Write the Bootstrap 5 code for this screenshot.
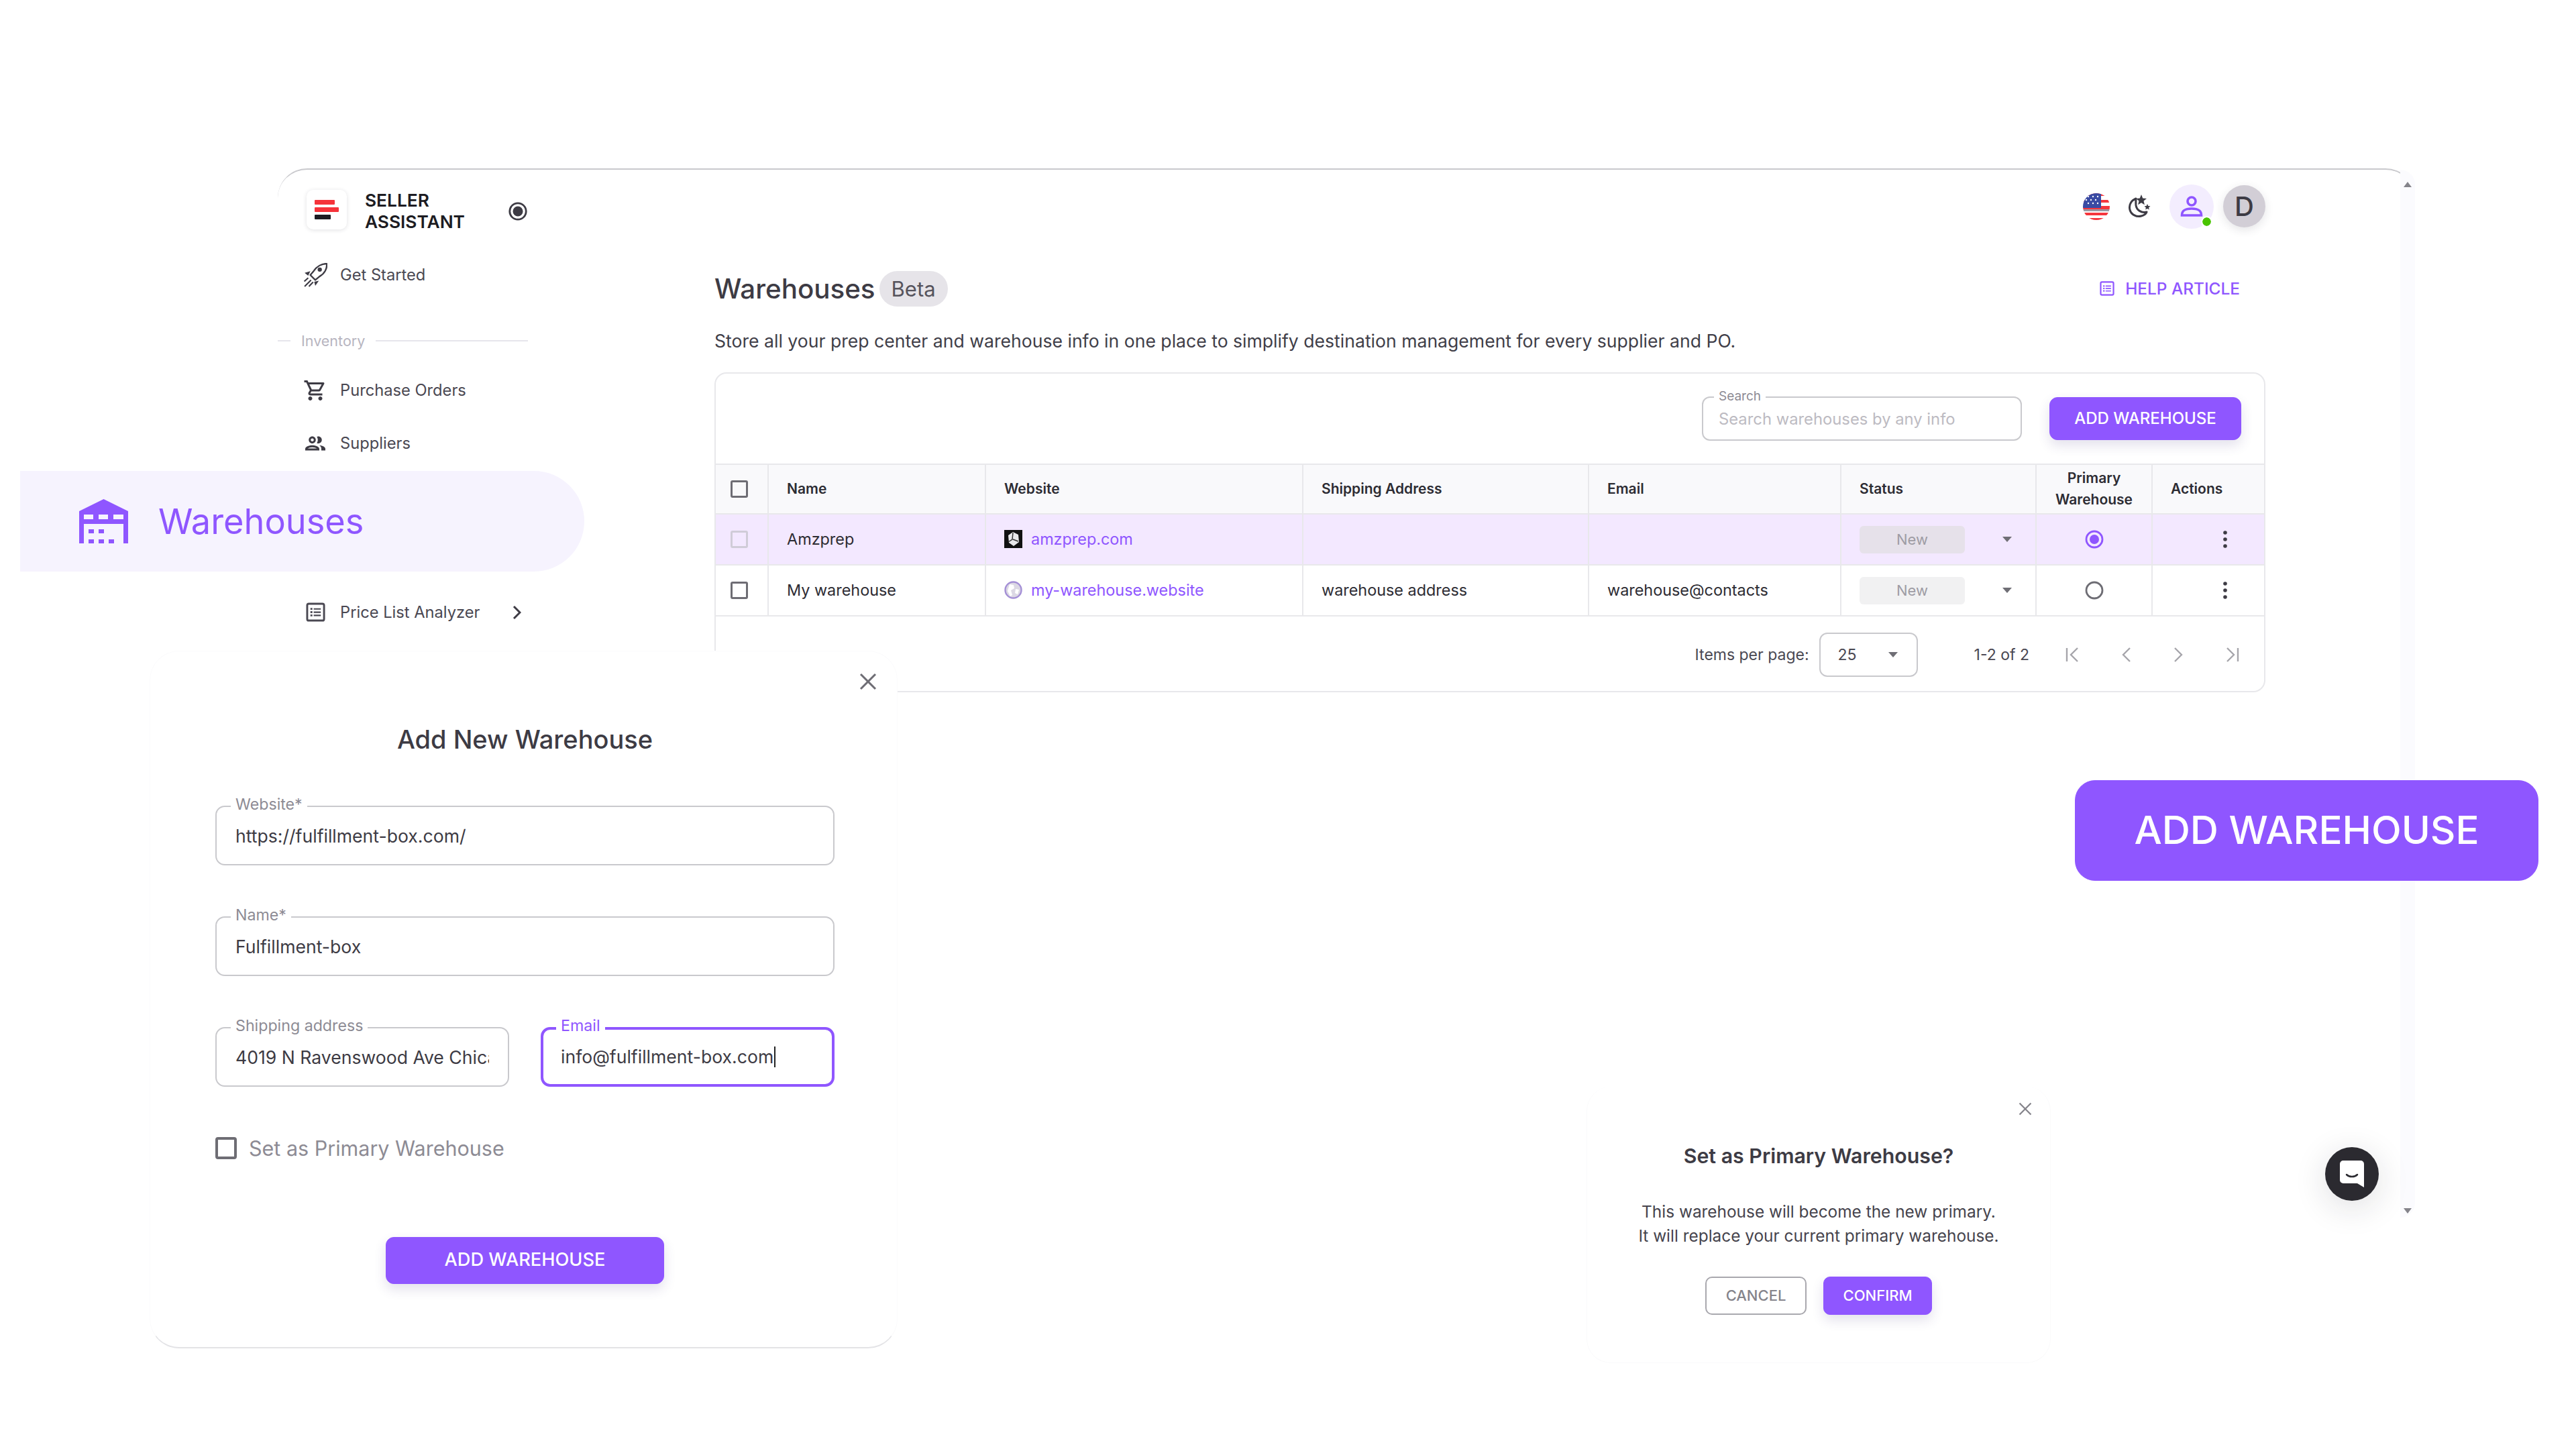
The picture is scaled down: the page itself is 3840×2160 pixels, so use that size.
<!DOCTYPE html>
<html lang="en">
<head>
<meta charset="UTF-8">
<title>Warehouses</title>
<link href="https://cdn.jsdelivr.net/npm/bootstrap@5.3.0/dist/css/bootstrap.min.css" rel="stylesheet">
<style>
:root { --wh-purple:#8f56ff; --wh-text:#3d3b44; --wh-muted:#8d8b94; --wh-line:#e8e8eb; }
html, body { margin:0; background:#fff; }
body { font-family:Inter,"Noto Sans",sans-serif; color:var(--wh-text); font-size:22px; }
.stage { width:3840px; height:2160px; overflow:hidden; }
a.wh-link { color:var(--wh-purple); text-decoration:none; }

.app-window { left:414px; top:251px; width:3186px; height:1564px; background:#fff; border-top:2px solid #c9c9cd; border-radius:44px; }
.scroll-rail { right:0; top:0; bottom:0; width:22px; background:#fbfbfe; border-radius:0 44px 44px 0; }
.scroll-up { left:5px; top:18px; border:6px solid transparent; border-top:0; border-bottom:8px solid #85848b; }
.scroll-down { left:5px; bottom:6px; border:6px solid transparent; border-bottom:0; border-top:8px solid #85848b; }

.side-col { width:651px; flex:none; padding-top:30px; }
.brand-row { height:87px; padding-left:43px; }
.brand-box { width:60px; height:59px; border-radius:10px; box-shadow:0 1px 6px rgba(40,40,60,.14); }
.brand-name { margin-left:27px; font-size:26.300px; line-height:32px; font-weight:600; color:#1d1c22; width:214px; }
.brand-radio { margin-top:18px; }
.side-item { height:79px; padding-left:38px; font-size:23.700px; color:#4a4852; }
.side-item svg { flex:none; }
.side-item .side-label { position:absolute; left:93px; }
.side-item-list { padding-left:42px; }
.side-arrow { left:350px; }
.side-group { height:40px; margin-top:39px; margin-bottom:14px; font-size:21.500px; color:#b7b5bf; }
.side-group i { display:block; height:2px; background:#e6e5ec; }
.side-group .line-short { width:19px; }
.side-group .line-long { width:227px; }
.side-pill { margin:2px 0 21px -384px; width:841px; height:150px; background:#f6f3fe; border-radius:0 75px 75px 0; padding-left:88px; color:var(--wh-purple); font-size:52.300px; position:relative; }
.side-pill span { margin-left:45px; }

.main-col { width:2312px; flex:none; }
.top-bar { height:109px; padding-right:2px; }
.flag-ico { margin-right:27px; }
.moon-ico { margin-right:26px; }
.user-ico { width:66px; height:66px; background:#f3edfe; }
.user-dot { width:13px; height:13px; right:4px; bottom:4px; background:#49c400; outline:2px solid #fff; }
.avatar-d { width:63px; height:63px; margin:0 -2px 0 14px; background:#d2ced6; font-size:40px; font-weight:500; box-shadow:0 4px 14px rgba(40,40,60,.12); }

.page-title { font-size:40.300px; font-weight:500; line-height:53px; margin:42px 0 0; }
.beta-tag { height:53px; margin-left:6px; padding:0 18px; background:#e6e4e9; border-radius:27px; font-size:31px; color:#56545d; font-weight:400; }
.help-link { font-size:24.400px; font-weight:500; margin:42px 38px 0 0; gap:16px; }
.help-link svg { color:var(--wh-purple); }
.page-desc { font-size:26.600px; line-height:36px; margin:33px 0 29px; color:#403e48; }

.table-shell { border:2px solid var(--wh-line); border-radius:18px; height:477px; overflow:hidden; }
.table-tools { height:134px; padding:0 34px 0 0; gap:41px; }

.wh-btn { --bs-btn-bg:#8f56ff; --bs-btn-border-color:#8f56ff; --bs-btn-color:#fff; --bs-btn-hover-bg:#7c45ee; --bs-btn-hover-border-color:#7c45ee; --bs-btn-hover-color:#fff; font-weight:500; box-shadow:0 8px 18px rgba(60,40,120,.14); padding:0; display:flex; align-items:center; justify-content:center; }
.btn-tools { width:286px; height:64px; border-radius:12px; font-size:24px; }
.btn-modal { width:415px; height:70px; border-radius:12px; font-size:27.200px; }
.btn-confirm { width:162px; height:57px; border-radius:10px; font-size:22px; }
.btn-cancel { width:151px; height:57px; border-radius:10px; font-size:22px; font-weight:500; color:#85848b; border:2px solid #a9a8ae; background:#fff; padding:0; display:flex; align-items:center; justify-content:center; }
.btn-huge { left:3093px; top:1163px; width:691px; height:150px; border-radius:30px; font-size:58.300px; box-shadow:none; }

.out-field { position:relative; }
.out-field .form-control { border:2px solid #c9c9cd; border-radius:14px; color:#3d3b44; box-shadow:none; background:#fff; }
.out-field label { position:absolute; background:#fff; color:var(--wh-muted); padding:0 7px; line-height:1; }
.field-search { width:477px; }
.field-search .form-control { height:66px; font-size:23.800px; padding:0 23px; border-radius:12px; }
.field-search .form-control::placeholder { color:#bdbbc2; }
.field-search label { font-size:19px; left:18px; top:-10px; }

.wh-table { table-layout:fixed; --bs-border-width:2px; --bs-table-border-color:var(--wh-line); --bs-table-color:#2d2c33; }
.wh-table th, .wh-table td { padding:0 27px; font-size:23.400px; vertical-align:middle; }
.wh-table th { font-size:21px; font-weight:600; height:74px; line-height:32px; --bs-table-bg:#f9f9fb; }
.wh-table td { height:76px; font-weight:400; }
.wh-table th:first-child, .wh-table td:first-child { padding:0 0 0 22px; border-left:0; }
.wh-table th:last-child, .wh-table td:last-child { border-right:0; }
.wh-row-on td { --bs-table-bg:#f3e8ff; border-bottom-color:#ddd5ec; }
.col-a { width:78px; } .col-b { width:324px; } .col-c { width:473px; } .col-d { width:426px; }
.col-e { width:376px; } .col-f { width:291px; } .col-g { width:173px; } .col-h { width:167px; }
.tick-box { display:block; width:26px; height:26px; border:3px solid #6e6d74; border-radius:3px; }
.tick-pale { border-color:#d0ccd8; }
.status-chip { width:157px; height:41px; background:#f1f1f2; border-radius:6px; color:#9e9ca4; font-size:22px; }
.wh-row-on .status-chip { background:#e6e1ea; }
.cell-center { text-align:center; padding-left:0 !important; padding-right:0 !important; }
.cell-center svg { display:block; margin:0 auto; }
.site-ico { margin-right:13px; flex:none; }
.caret-ico { color:#6f6e75; }
.wh-table .dots-ico { color:#3d3b44; margin-left:105px; }

.page-bar { height:114px; padding-right:36px; font-size:23px; color:#4a4852; }
.size-pick { width:147px; height:66px; margin:0 84px 0 15px; padding:0 28px 0 26px; border:2px solid #c9c9cd; border-radius:12px; }
.pager-ico { gap:63px; margin-left:53px; }

.add-modal { left:223px; top:970px; width:1115px; height:1040px; background:#fff; border:1px solid #fbfbfc; border-bottom:2px solid #e3e3e6; border-radius:44px; padding:0 93px 0 97px; }
.close-x { background:none; border:0; padding:0; line-height:0; }
.add-modal .close-x { left:1057px; top:32px; color:#6e6d74; }
.add-title { font-size:38px; font-weight:500; line-height:46px; text-align:center; margin:108px 0 76px; }
.add-modal .out-field { height:89px; }
.add-modal .out-field .form-control { height:89px; font-size:26.600px; padding:0 28px; }
.add-modal .out-field label { font-size:23.200px; left:23px; top:-13px; }
.field-gap { margin-top:76px; }
.field-focus .form-control { border:4px solid var(--wh-purple) !important; padding:0 26px !important; display:flex; align-items:center; }
.field-focus label { color:var(--wh-purple) !important; }
.text-cursor { display:inline-block; width:2px; height:31px; background:#222; margin-left:1px; }
.field-pair { gap:47px; margin:76px 0 0; }
.field-pair > div { flex:1 1 0; min-width:0; }
.primary-check { margin:69px 0 109px; gap:18px; font-size:30.500px; color:#8d8b94; }
.primary-check .tick-box { width:32px; height:33px; border-width:4px; border-radius:4px; }

.confirm-modal { left:2365px; top:1620px; width:692px; height:412px; background:#fff; border:1px solid #fafafb; border-top:0; border-radius:36px; padding-top:83px; text-align:center; }
.confirm-modal .close-x { left:643px; top:23px; color:#85848b; }
.confirm-title { font-size:30.300px; font-weight:600; line-height:40px; margin:0 0 45px; }
.confirm-text { font-size:24.400px; line-height:36px; margin:0 0 43px; color:#46444d; }
.confirm-btns { gap:25px; padding-left:176px; }

.chat-fab { left:3466px; top:1710px; width:80px; height:80px; background:#2b2a30; box-shadow:0 10px 50px rgba(30,30,40,.14); }
</style>
</head>
<body>

<svg width="0" height="0" class="position-absolute">
  <defs>
    <symbol id="ico-list" viewBox="0 0 30 30">
      <rect x="2" y="2" width="26" height="26" rx="2.5" fill="none" stroke="currentColor" stroke-width="3"/>
      <path d="M7 8.5h3v3H7zM7 13.500h3v3H7zM7 18.500h3v3H7zM12 9h11v2.200H12zM12 14h11v2.200H12zM12 19h11v2.200H12z" fill="currentColor"/>
    </symbol>
    <symbol id="ico-caret" viewBox="0 0 14 8"><path d="M0 0h14L7 8z" fill="currentColor"/></symbol>
    <symbol id="ico-dots" viewBox="0 0 6 26"><circle cx="3" cy="3" r="2.8" fill="currentColor"/><circle cx="3" cy="13" r="2.8" fill="currentColor"/><circle cx="3" cy="23" r="2.8" fill="currentColor"/></symbol>
    <symbol id="ico-x" viewBox="0 0 26 26"><path d="M2 2l22 22M24 2L2 24" fill="none" stroke="currentColor" stroke-width="3"/></symbol>
  </defs>
</svg>

<div class="stage position-relative">

  <!-- main app window -->
  <div class="app-window position-absolute d-flex">
    <aside class="side-col">
      <div class="brand-row d-flex align-items-start">
        <div class="brand-box bg-white d-flex align-items-center justify-content-center">
          <svg width="36" height="30" viewBox="0 0 36 30"><rect x="0" y="0" width="30" height="7" rx="1" fill="#f5333a"/><rect x="0" y="11" width="36" height="7" rx="1" fill="#f5333a"/><rect x="0" y="22" width="24" height="7" rx="1" fill="#1d1c22"/></svg>
        </div>
        <div class="brand-name">SELLER ASSISTANT</div>
        <svg class="brand-radio" width="28" height="28" viewBox="0 0 28 28"><circle cx="14" cy="14" r="12.200" fill="none" stroke="#3d3b44" stroke-width="2.800"/><circle cx="14" cy="14" r="7.500" fill="#3d3b44"/></svg>
      </div>

      <div class="side-item d-flex align-items-center position-relative">
        <svg width="36" height="36" viewBox="0 0 34 34" fill="none" stroke="#3d3b44" stroke-width="2.200" stroke-linejoin="round"><path d="M33 1C26 1 19 5 15 11l-5 6 7 7 6-5c7-4 11-11 10-18z"/><circle cx="23.300" cy="9.300" r="3" fill="#3d3b44" stroke="none"/><path d="M2 14l8-2.500-3 6.500zM17 32l5-7-6.500 1.500z" fill="#3d3b44" stroke="none"/><path d="M7 21l-5.500 5M11 24l-9 9M14 27l-6 6" stroke-width="2"/></svg>
        <span class="side-label">Get Started</span>
      </div>

      <div class="side-group d-flex align-items-center">
        <i class="line-short"></i><span class="mx-3">Inventory</span><i class="line-long"></i>
      </div>

      <div class="side-item d-flex align-items-center position-relative">
        <svg width="36" height="36" viewBox="0 0 24 24" fill="#3d3b44"><path d="M15.55 13c.75 0 1.41-.41 1.75-1.03l3.58-6.49c.37-.66-.11-1.48-.87-1.48H5.21l-.94-2H1v2h2l3.6 7.59-1.35 2.44C4.52 15.37 5.48 17 7 17h12v-2H7l1.1-2h7.45zM6.16 6h12.15l-2.76 5H8.53L6.16 6zM7 18c-1.1 0-1.99.9-1.99 2S5.9 22 7 22s2-.9 2-2-.9-2-2-2zm10 0c-1.1 0-1.99.9-1.99 2s.89 2 1.99 2 2-.9 2-2-.9-2-2-2z"/></svg>
        <span class="side-label">Purchase Orders</span>
      </div>
      <div class="side-item d-flex align-items-center position-relative">
        <svg width="36" height="36" viewBox="0 0 24 24" fill="#3d3b44"><path d="M9 13.75c-2.34 0-7 1.17-7 3.5V19h14v-1.75c0-2.33-4.66-3.5-7-3.5zM4.34 17c.84-.58 2.87-1.25 4.66-1.25s3.82.67 4.66 1.25H4.34zM9 12c1.93 0 3.5-1.57 3.5-3.5S10.93 5 9 5 5.5 6.57 5.5 8.5 7.07 12 9 12zm0-5c.83 0 1.5.67 1.5 1.5S9.83 10 9 10s-1.5-.67-1.5-1.5S8.17 7 9 7zm7.04 6.81c1.16.84 1.96 1.96 1.96 3.44V19h4v-1.75c0-2.02-3.5-3.17-5.96-3.44zM15 12c1.93 0 3.5-1.57 3.5-3.5S16.93 5 15 5c-.54 0-1.04.13-1.5.35.63.89 1 1.98 1 3.15s-.37 2.26-1 3.15c.46.22.96.35 1.5.35z"/></svg>
        <span class="side-label">Suppliers</span>
      </div>

      <div class="side-pill d-flex align-items-center">
        <svg width="73" height="66" viewBox="0 0 73 66" fill="#8f56ff"><path fill-rule="evenodd" d="M36.500 0L73 18v48h-7V37H7v29H0V18zM7 23v7h14v-7zM29 23v7h14v-7zM51 23v7h15v-7z"/><path d="M14 45h8v6h-8zM29 45h8v6h-8zM14 60h8v6h-8zM29 60h8v6h-8zM44 60h8v6h-8z"/></svg>
        <span>Warehouses</span>
      </div>

      <div class="side-item side-item-list d-flex align-items-center position-relative">
        <svg width="29" height="29"><use href="#ico-list"/></svg>
        <span class="side-label">Price List Analyzer</span>
        <svg class="side-arrow position-absolute" width="13" height="22" viewBox="0 0 13 22" fill="none" stroke="#3d3b44" stroke-width="3"><path d="M2 2l9 9-9 9"/></svg>
      </div>
    </aside>

    <section class="main-col">
      <div class="top-bar d-flex align-items-center justify-content-end">
        <svg class="flag-ico" width="40" height="42" viewBox="0 0 40 42">
          <defs><clipPath id="flag-clip"><circle cx="20" cy="21" r="20"/></clipPath></defs>
          <g clip-path="url(#flag-clip)">
            <rect width="40" height="42" fill="#fff"/>
            <path d="M0 0h40v5H0zM0 11h40v4H0zM0 20h40v5H0zM0 30h40v4H0zM0 38h40v4H0z" fill="#f5363d"/>
            <rect y="25" width="40" height="3" fill="#9b9aa3"/>
            <rect width="27" height="23" fill="#3a4ba3"/>
            <g fill="#fff"><circle cx="8" cy="6" r="1.200"/><circle cx="15" cy="6" r="1.200"/><circle cx="22" cy="6" r="1.200"/><circle cx="5" cy="11" r="1.200"/><circle cx="12" cy="11" r="1.200"/><circle cx="19" cy="11" r="1.200"/><circle cx="8" cy="16" r="1.200"/><circle cx="15" cy="16" r="1.200"/><circle cx="22" cy="16" r="1.200"/></g>
          </g>
        </svg>
        <svg class="moon-ico" width="36" height="38" viewBox="0 0 36 38"><path d="M12 7C5 10 1 16 3 24c2 7 10 11 17 9 4-1 7-3 8-6-8 2-15-3-16-10-.4-4 0-7 0-10z" fill="none" stroke="#3d3b44" stroke-width="3" stroke-linejoin="round"/><path d="M20 1l2.200 5.500 5.800.4-4.500 3.700 1.400 5.600-4.900-3-4.900 3 1.400-5.600L12 6.900l5.800-.4zM29 15l1.300 3 3.200.3-2.400 2.100.7 3.100-2.800-1.600-2.800 1.600.7-3.100-2.400-2.100 3.200-.3z" fill="#3d3b44"/></svg>
        <div class="user-ico rounded-circle position-relative d-flex align-items-center justify-content-center">
          <svg width="34" height="34" viewBox="0 0 34 34" fill="none" stroke="#8f56ff" stroke-width="3.600"><circle cx="17" cy="9" r="6"/><path d="M2.500 30c0-8 6-10 14.500-10s14.500 2 14.500 10z"/></svg>
          <span class="user-dot position-absolute rounded-circle"></span>
        </div>
        <div class="avatar-d rounded-circle d-flex align-items-center justify-content-center">D</div>
      </div>

      <div class="d-flex align-items-center justify-content-between">
        <h1 class="page-title d-flex align-items-center">Warehouses<span class="beta-tag d-inline-flex align-items-center">Beta</span></h1>
        <a class="wh-link help-link d-flex align-items-center" href="#">
          <svg width="22" height="24"><use href="#ico-list"/></svg>HELP ARTICLE
        </a>
      </div>
      <p class="page-desc">Store all your prep center and warehouse info in one place to simplify destination management for every supplier and PO.</p>

      <div class="table-shell bg-white">
        <div class="table-tools d-flex align-items-center justify-content-end">
          <div class="out-field field-search">
            <label>Search</label>
            <input class="form-control" type="text" placeholder="Search warehouses by any info">
          </div>
          <button class="btn wh-btn btn-tools" type="button">ADD WAREHOUSE</button>
        </div>

        <table class="table table-bordered align-middle mb-0 wh-table">
          <colgroup><col class="col-a"><col class="col-b"><col class="col-c"><col class="col-d"><col class="col-e"><col class="col-f"><col class="col-g"><col class="col-h"></colgroup>
          <thead>
            <tr>
              <th><span class="tick-box"></span></th>
              <th>Name</th>
              <th>Website</th>
              <th>Shipping Address</th>
              <th>Email</th>
              <th>Status</th>
              <th class="cell-center">Primary Warehouse</th>
              <th>Actions</th>
            </tr>
          </thead>
          <tbody>
            <tr class="wh-row-on">
              <td><span class="tick-box tick-pale"></span></td>
              <td>Amzprep</td>
              <td>
                <div class="d-flex align-items-center">
                  <svg class="site-ico" width="27" height="27" viewBox="0 0 27 27"><rect width="27" height="27" fill="#111"/><path d="M13 3l8 4 1 11-8 6-7-5-1-11z" fill="#e8e8ea"/><path d="M13 4l-1 10-6 4M13 14l8 3" stroke="#333" stroke-width="1.500" fill="none"/></svg>
                  <a class="wh-link" href="#">amzprep.com</a>
                </div>
              </td>
              <td></td>
              <td></td>
              <td>
                <div class="d-flex align-items-center">
                  <span class="status-chip d-flex align-items-center justify-content-center">New</span>
                  <svg class="caret-ico ms-auto me-2" width="14" height="8"><use href="#ico-caret"/></svg>
                </div>
              </td>
              <td class="cell-center"><svg width="28" height="28" viewBox="0 0 28 28"><circle cx="14" cy="14" r="12" fill="none" stroke="#8f56ff" stroke-width="2.800"/><circle cx="14" cy="14" r="7" fill="#8f56ff"/></svg></td>
              <td class="cell-center"><svg class="dots-ico" width="6" height="26"><use href="#ico-dots"/></svg></td>
            </tr>
            <tr>
              <td><span class="tick-box"></span></td>
              <td>My warehouse</td>
              <td>
                <div class="d-flex align-items-center">
                  <svg class="site-ico" width="27" height="27" viewBox="0 0 27 27"><circle cx="13.500" cy="13.500" r="12" fill="#dcd8e4" stroke="#a48fd6" stroke-width="2.400"/><path d="M8 5l6 1 1 5-5 3 2 7-3 2-4-8zM17 12l5 1-2 7-4-2z" fill="#fff"/></svg>
                  <a class="wh-link" href="#">my-warehouse.website</a>
                </div>
              </td>
              <td>warehouse address</td>
              <td>warehouse@contacts</td>
              <td>
                <div class="d-flex align-items-center">
                  <span class="status-chip d-flex align-items-center justify-content-center">New</span>
                  <svg class="caret-ico ms-auto me-2" width="14" height="8"><use href="#ico-caret"/></svg>
                </div>
              </td>
              <td class="cell-center"><svg width="28" height="28" viewBox="0 0 28 28"><circle cx="14" cy="14" r="12" fill="none" stroke="#6e6d74" stroke-width="2.800"/></svg></td>
              <td class="cell-center"><svg class="dots-ico" width="6" height="26"><use href="#ico-dots"/></svg></td>
            </tr>
          </tbody>
        </table>

        <div class="page-bar d-flex align-items-center justify-content-end">
          <span>Items per page:</span>
          <div class="size-pick d-flex align-items-center justify-content-between">
            <span>25</span>
            <svg class="caret-ico" width="14" height="8"><use href="#ico-caret"/></svg>
          </div>
          <span>1-2 of 2</span>
          <div class="pager-ico d-flex align-items-center">
            <svg width="22" height="24" viewBox="0 0 22 24" fill="none" stroke="#a6a5ab" stroke-width="2.400"><path d="M3 2v20M19 2L9 12l10 10"/></svg>
            <svg width="14" height="24" viewBox="0 0 14 24" fill="none" stroke="#a6a5ab" stroke-width="2.400"><path d="M12 2L2 12l10 10"/></svg>
            <svg width="14" height="24" viewBox="0 0 14 24" fill="none" stroke="#a6a5ab" stroke-width="2.400"><path d="M2 2l10 10L2 22"/></svg>
            <svg width="22" height="24" viewBox="0 0 22 24" fill="none" stroke="#a6a5ab" stroke-width="2.400"><path d="M19 2v20M3 2l10 10L3 22"/></svg>
          </div>
        </div>
      </div>
    </section>

    <div class="scroll-rail position-absolute">
      <span class="scroll-up position-absolute"></span>
      <span class="scroll-down position-absolute"></span>
    </div>
  </div>

  <!-- add warehouse dialog -->
  <div class="add-modal position-absolute">
    <button class="close-x position-absolute" type="button"><svg width="26" height="26"><use href="#ico-x"/></svg></button>
    <h2 class="add-title">Add New Warehouse</h2>
    <div class="out-field">
      <label>Website*</label>
      <input class="form-control" type="text" value="https://fulfillment-box.com/">
    </div>
    <div class="out-field field-gap">
      <label>Name*</label>
      <input class="form-control" type="text" value="Fulfillment-box">
    </div>
    <div class="field-pair d-flex">
      <div class="out-field">
        <label>Shipping address</label>
        <input class="form-control" type="text" value="4019 N Ravenswood Ave Chicago">
      </div>
      <div class="out-field field-focus">
        <label>Email</label>
        <div class="form-control">info@fulfillment-box.com<span class="text-cursor"></span></div>
      </div>
    </div>
    <div class="primary-check d-flex align-items-center">
      <span class="tick-box"></span>Set as Primary Warehouse
    </div>
    <div class="d-flex justify-content-center">
      <button class="btn wh-btn btn-modal" type="button">ADD WAREHOUSE</button>
    </div>
  </div>

  <!-- set primary confirm dialog -->
  <div class="confirm-modal position-absolute">
    <button class="close-x position-absolute" type="button"><svg width="20" height="20"><use href="#ico-x"/></svg></button>
    <h3 class="confirm-title">Set as Primary Warehouse?</h3>
    <p class="confirm-text">This warehouse will become the new primary.<br>It will replace your current primary warehouse.</p>
    <div class="confirm-btns d-flex">
      <button class="btn btn-cancel" type="button">CANCEL</button>
      <button class="btn wh-btn btn-confirm" type="button">CONFIRM</button>
    </div>
  </div>

  <!-- enlarged callout -->
  <button class="btn wh-btn btn-huge position-absolute" type="button">ADD WAREHOUSE</button>

  <div class="chat-fab position-absolute rounded-circle d-flex align-items-center justify-content-center">
    <svg width="36" height="40" viewBox="0 0 36 40"><path d="M5 0h26a5 5 0 0 1 5 5v35l-10-6H5a5 5 0 0 1-5-5V5a5 5 0 0 1 5-5z" fill="#fff"/><path d="M10 21c4 4 12 4 16 0" fill="none" stroke="#2b2a30" stroke-width="2.500" stroke-linecap="round"/></svg>
  </div>
</div>

<script src="https://cdn.jsdelivr.net/npm/bootstrap@5.3.0/dist/js/bootstrap.bundle.min.js"></script>
</body>
</html>
